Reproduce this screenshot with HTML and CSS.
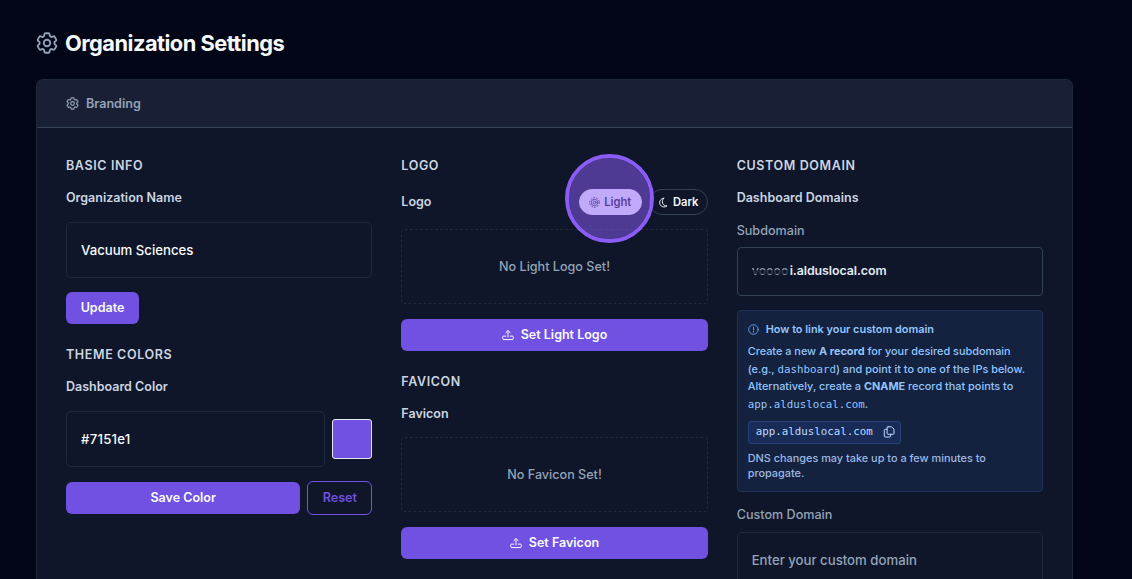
FILE: index.html
```html
<!DOCTYPE html>
<html lang="en">
<head>
    <meta charset="UTF-8">
    <meta name="viewport" content="width=device-width, initial-scale=1.0">
    <title>Organization Settings</title>
    <link rel="stylesheet" href="styles.css">
</head>
<body>
    <svg class="symbols" width="0" height="0">
        <symbol id="cog" viewBox="0 0 24 24">
            <path d="M9.594 3.94c.09-.542.56-.94 1.11-.94h2.593c.55 0 1.02.398 1.11.94l.213 1.281c.063.374.313.686.645.87.074.04.147.083.22.127.325.196.72.257 1.075.124l1.217-.456a1.125 1.125 0 0 1 1.37.49l1.296 2.247a1.125 1.125 0 0 1-.26 1.431l-1.003.827c-.293.241-.438.613-.43.992a7.723 7.723 0 0 1 0 .255c-.008.378.137.75.43.991l1.004.827c.424.35.534.955.26 1.43l-1.298 2.247a1.125 1.125 0 0 1-1.369.491l-1.217-.456c-.355-.133-.75-.072-1.076.124a6.47 6.47 0 0 1-.22.128c-.331.183-.581.495-.644.869l-.213 1.281c-.09.543-.56.94-1.11.94h-2.594c-.55 0-1.019-.398-1.11-.94l-.213-1.281c-.062-.374-.312-.686-.644-.87a6.52 6.52 0 0 1-.22-.127c-.325-.196-.72-.257-1.076-.124l-1.217.456a1.125 1.125 0 0 1-1.369-.49l-1.297-2.247a1.125 1.125 0 0 1 .26-1.431l1.004-.827c.292-.24.437-.613.43-.991a6.932 6.932 0 0 1 0-.255c.007-.38-.138-.751-.43-.992l-1.004-.827a1.125 1.125 0 0 1-.26-1.43l1.297-2.247a1.125 1.125 0 0 1 1.37-.491l1.216.456c.356.133.751.072 1.076-.124.072-.044.146-.086.22-.128.332-.183.582-.495.644-.869l.214-1.28Z"/>
            <circle cx="12" cy="12" r="3"/>
        </symbol>
        <symbol id="upload" viewBox="0 0 12 12">
            <path d="M6 8V1.7M3.8 3.8 6 1.6l2.2 2.2M3.8 7.1H1.5a.7.7 0 0 0-.7.7v2c0 .5.3.8.8.8h8.8c.5 0 .8-.3.8-.8v-2a.7.7 0 0 0-.7-.7H8.2"/>
        </symbol>
    </svg>

    <div class="container">
        <h1><svg class="title-icon"><use href="#cog"/></svg>Organization Settings</h1>

        <div class="card">
            <div class="card-header"><svg class="header-icon"><use href="#cog"/></svg>Branding</div>

            <div class="card-body">
                <div class="column">
                    <h2>Basic Info</h2>
                    <label class="label" for="orgname">Organization Name</label>
                    <input type="text" id="orgname" value="Vacuum Sciences">
                    <button class="button update">Update</button>

                    <h2 class="next">Theme Colors</h2>
                    <label class="label" for="color">Dashboard Color</label>
                    <div class="color-row">
                        <input type="text" class="medium" id="color" value="#7151e1">
                        <div class="swatch"></div>
                    </div>
                    <div class="button-row">
                        <button class="button save">Save Color</button>
                        <button class="button reset">Reset</button>
                    </div>
                </div>

                <div class="column">
                    <h2>Logo</h2>
                    <div class="logo-row">
                        <span class="label">Logo</span>
                        <div class="modes">
                            <button class="mode light">
                                <svg viewBox="0 0 12 12"><circle cx="6" cy="6" r="1.5"/><circle cx="6" cy="6" r="3.5"/><circle class="rays" cx="6" cy="6" r="5.2"/></svg>
                                Light
                                <span class="highlight"></span>
                            </button>
                            <button class="mode dark">
                                <svg viewBox="0 0 12 12"><path d="M6.2 1.3A4.8 4.8 0 1 0 9.8 9.6C4.8 9.8 3.2 4.8 6.2 1.3Z"/></svg>
                                Dark
                            </button>
                        </div>
                    </div>
                    <div class="dropzone">No Light Logo Set!</div>
                    <button class="button"><svg class="upload"><use href="#upload"/></svg>Set Light Logo</button>

                    <h2 class="next">Favicon</h2>
                    <span class="label">Favicon</span>
                    <div class="dropzone">No Favicon Set!</div>
                    <button class="button"><svg class="upload"><use href="#upload"/></svg>Set Favicon</button>
                </div>

                <div class="column">
                    <h2>Custom Domain</h2>
                    <span class="label">Dashboard Domains</span>
                    <span class="sublabel">Subdomain</span>
                    <div class="subdomain"><span class="masked">voooo</span>i.alduslocal.com</div>

                    <div class="info">
                        <div class="info-title">
                            <svg viewBox="0 0 12 12"><circle cx="6" cy="6" r="5.2"/><path d="M6 3.2v3.4M6 8v.9"/></svg>
                            How to link your custom domain
                        </div>
                        <p>Create a new <b>A record</b> for your desired subdomain<br>(e.g., <code>dashboard</code>) and point it to one of the IPs below.<br>Alternatively, create a <b>CNAME</b> record that points to<br><code>app.alduslocal.com</code>.</p>
                        <div class="copy">
                            <code>app.alduslocal.com</code>
                            <svg viewBox="0 0 12 12"><path d="M5 .8h3.4L11 3.2v4.2c0 .6-.3.9-.9.9H5c-.6 0-.9-.3-.9-.9V1.7c0-.6.3-.9.9-.9ZM4.1 3.3H2.2c-.6 0-.9.3-.9.9v5.9c0 .6.3.9.9.9h4.5c.6 0 .9-.3.9-.9V8.3"/></svg>
                        </div>
                        <p class="note">DNS changes may take up to a few minutes to propagate.</p>
                    </div>

                    <label class="sublabel" for="domain">Custom Domain</label>
                    <input type="text" id="domain" placeholder="Enter your custom domain">
                </div>
            </div>
        </div>
    </div>
</body>
</html>
```
FILE: styles.css
```css
* {
    box-sizing: border-box;
}
body {
    margin: 0;
    height: 579px;
    overflow: hidden;
    background-color: #020617;
    color: #f8fafc;
    font-family: 'Inter', sans-serif;
    font-size: 12.6px;
    line-height: 18px;
}
svg {
    fill: none;
    stroke: currentColor;
    stroke-linecap: round;
    stroke-linejoin: round;
    flex-shrink: 0;
}
.symbols {
    display: none;
}
.container {
    width: 1037px;
    height: 579px;
    margin-left: 36px;
    padding-top: 28px;
    overflow: hidden;
}
h1 {
    display: flex;
    align-items: center;
    gap: 5px;
    height: 30px;
    margin: 0 0 21px;
    font-size: 21.8px;
    font-weight: 700;
    letter-spacing: -0.52px;
}
.title-icon {
    width: 26px;
    height: 26px;
    margin-left: -2px;
    color: #94a3b8;
    stroke-width: 1.7;
}
.card {
    height: 500px;
    background-color: #0f1629;
    border: 1px solid #1e293b;
    border-bottom: none;
    border-radius: 7px 7px 0 0;
    overflow: hidden;
}
.card-header {
    display: flex;
    align-items: center;
    gap: 6px;
    height: 48px;
    padding-left: 28px;
    background-color: #192035;
    border-bottom: 1px solid #334155;
    color: #94a3b8;
    font-weight: 570;
}
.header-icon {
    width: 15px;
    height: 15px;
    stroke-width: 1.9;
}
.card-body {
    display: grid;
    grid-template-columns: repeat(3, 1fr);
    gap: 29px;
    padding: 29px 29px 0;
}
.column {
    display: flex;
    flex-direction: column;
    min-width: 0;
}
h2 {
    margin: 0 0 14px;
    color: #cbd5e1;
    font-size: 12.5px;
    font-weight: 600;
    letter-spacing: 0.62px;
    text-transform: uppercase;
}
h2.next {
    margin-top: 22px;
}
.label {
    color: #cbd5e1;
    font-size: 12.5px;
    font-weight: 580;
}
input {
    width: 100%;
    height: 56px;
    margin-top: 15px;
    padding: 0 14px 1px;
    background: transparent;
    border: 1px solid #1e293b;
    border-radius: 5px;
    color: #f8fafc;
    font: 450 13.2px 'Inter', sans-serif;
}
input.medium {
    font-weight: 500;
    letter-spacing: 0.25px;
}
input::placeholder {
    color: #94a3b8;
}
.button {
    display: flex;
    align-items: center;
    justify-content: center;
    gap: 7px;
    height: 32px;
    padding: 0 0 1px;
    background-color: #7151e1;
    border: none;
    border-radius: 6px;
    color: #f8fafc;
    font: 600 12.5px 'Inter', sans-serif;
}
.update {
    width: 73px;
    margin-top: 14px;
}
.color-row {
    display: flex;
    align-items: center;
    gap: 7px;
    margin-top: 15px;
}
.color-row input {
    flex: 1;
    min-width: 0;
    margin-top: 0;
}
.swatch {
    width: 40px;
    height: 40px;
    background-color: #7151e1;
    border: 1px solid #e2e8f0;
    border-radius: 3px;
}
.button-row {
    display: flex;
    align-items: center;
    gap: 7px;
    margin-top: 14px;
}
.save {
    flex: 1;
}
.reset {
    width: 65px;
    height: 34px;
    background: transparent;
    border: 1px solid #7151e1;
    color: #7151e1;
    font-weight: 570;
}
.logo-row {
    display: flex;
    align-items: center;
    justify-content: space-between;
    height: 26px;
}
.modes {
    display: flex;
    gap: 7px;
}
.mode {
    position: relative;
    display: flex;
    align-items: center;
    justify-content: center;
    gap: 4px;
    height: 26px;
    padding: 0;
    background: transparent;
    border: 1px solid #334155;
    border-radius: 13px;
    color: #f8fafc;
    font: 600 11.2px 'Inter', sans-serif;
}
.mode svg {
    width: 11px;
    height: 11px;
}
.light {
    z-index: 1;
    width: 63px;
    background-color: #ffffff;
    border-color: #ffffff;
    color: #1e1b3a;
}
.light svg {
    stroke-width: 0.9;
}
.rays {
    stroke-dasharray: 1.2 2.07;
}
.dark {
    width: 59px;
}
.highlight {
    position: absolute;
    top: -36px;
    left: -15px;
    width: 89px;
    height: 89px;
    background: rgba(139, 92, 246, 0.52) padding-box;
    border: 4px solid #8b5cf6;
    border-radius: 50%;
}
.dropzone {
    display: flex;
    align-items: center;
    justify-content: center;
    height: 75px;
    margin: 14px 0 15px;
    border: 1px dashed #1e293b;
    border-radius: 4px;
    color: #94a3b8;
    font-weight: 550;
}
.upload {
    width: 12px;
    height: 12px;
    margin-top: 1px;
}
.sublabel {
    margin-top: 15px;
    color: #94a3b8;
    font-weight: 470;
}
.subdomain {
    display: flex;
    align-items: center;
    height: 49px;
    margin: 7px 0 14px;
    padding: 0 14px 2px;
    border: 1px solid #334155;
    border-radius: 4px;
    color: #e2e8f0;
    font-size: 12.4px;
    font-weight: 580;
    letter-spacing: -0.07px;
}
.masked {
    width: 38px;
    background: linear-gradient(#0f1629 6px, #8b93a5 6px, #8b93a5 8px, #303950 8px, #303950 12px, #8b93a5 12px, #8b93a5 14px, #0f1629 14px);
    background-clip: text;
    color: transparent;
}
.info {
    height: 182px;
    padding: 10px;
    background-color: #14213f;
    border: 1px solid #1e3357;
    border-radius: 4px;
    color: #93c5fd;
    font-size: 10.9px;
    font-weight: 450;
    line-height: 17.6px;
}
.info-title {
    display: flex;
    align-items: center;
    gap: 7px;
    height: 17px;
    font-weight: 600;
}
.info-title svg {
    width: 11px;
    height: 11px;
    color: #60a5fa;
}
.info p {
    margin: 5px 0 0;
}
.info b {
    font-weight: 700;
}
code {
    font: 10.8px 'DejaVu Sans Mono', monospace;
}
.copy {
    display: flex;
    align-items: center;
    gap: 10px;
    width: 153px;
    height: 23px;
    margin-top: 8px;
    padding: 0 0 2px 7px;
    background-color: #182c57;
    border: 1px solid #264479;
    border-radius: 3px;
    color: #bfdbfe;
}
.copy svg {
    width: 12px;
    height: 12px;
}
.info .note {
    margin-top: 7px;
    color: #9db9e2;
    line-height: 15px;
}
label.sublabel {
    margin-top: 14px;
}
label.sublabel + input {
    margin-top: 8px;
}
```
